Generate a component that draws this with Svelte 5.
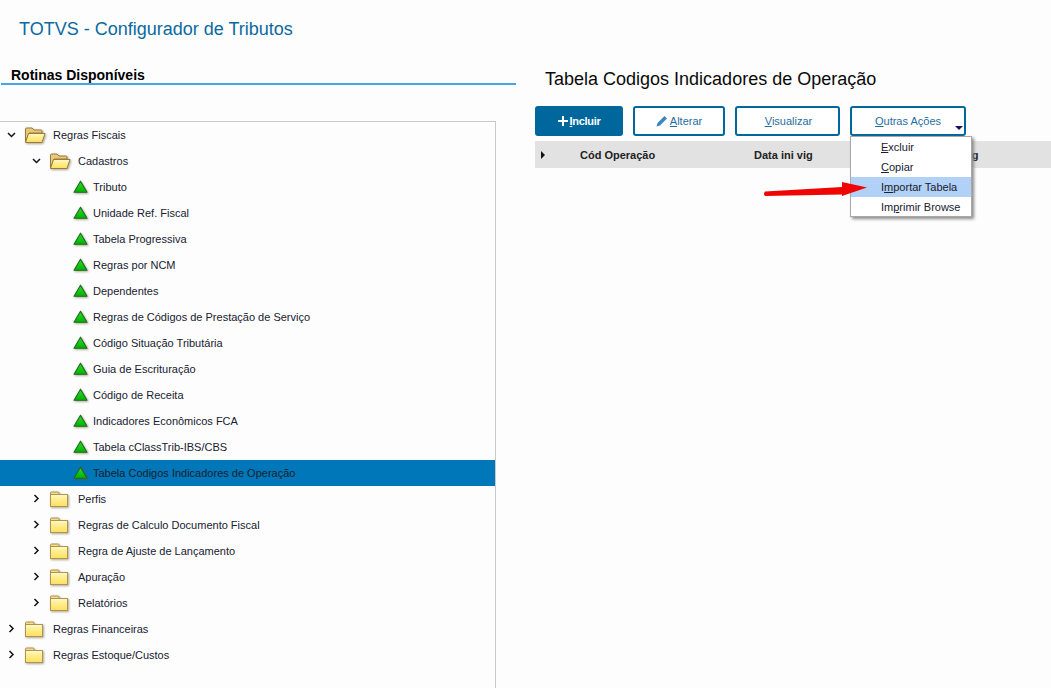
<script lang="ts">
	type Node = { label: string; level: number; kind: 'open' | 'closed' | 'leaf'; selected?: boolean };

	const leaves = [
		'Tributo',
		'Unidade Ref. Fiscal',
		'Tabela Progressiva',
		'Regras por NCM',
		'Dependentes',
		'Regras de Códigos de Prestação de Serviço',
		'Código Situação Tributária',
		'Guia de Escrituração',
		'Código de Receita',
		'Indicadores Econômicos FCA',
		'Tabela cClassTrib-IBS/CBS',
		'Tabela Codigos Indicadores de Operação'
	];

	const nodes: Node[] = [
		{ label: 'Regras Fiscais', level: 0, kind: 'open' },
		{ label: 'Cadastros', level: 1, kind: 'open' },
		...leaves.map((label, i): Node => ({ label, level: 2, kind: 'leaf', selected: i === leaves.length - 1 })),
		{ label: 'Perfis', level: 1, kind: 'closed' },
		{ label: 'Regras de Calculo Documento Fiscal', level: 1, kind: 'closed' },
		{ label: 'Regra de Ajuste de Lançamento', level: 1, kind: 'closed' },
		{ label: 'Apuração', level: 1, kind: 'closed' },
		{ label: 'Relatórios', level: 1, kind: 'closed' },
		{ label: 'Regras Financeiras', level: 0, kind: 'closed' },
		{ label: 'Regras Estoque/Custos', level: 0, kind: 'closed' }
	];
</script>

<svg class="defs" width="0" height="0">
	<defs>
		<linearGradient id="tri-fill" x1="0" y1="0" x2="0" y2="1">
			<stop offset="0" stop-color="#2fdc2f" />
			<stop offset="1" stop-color="#00b400" />
		</linearGradient>
		<linearGradient id="folder-fill" x1="0" y1="0" x2="0" y2="1">
			<stop offset="0" stop-color="#fffbd8" />
			<stop offset="0.3" stop-color="#fff09a" />
			<stop offset="1" stop-color="#ffdf5c" />
		</linearGradient>
	</defs>
</svg>

<div class="page">
	<h1 class="app-title">TOTVS - Configurador de Tributos</h1>

	<div class="columns">
		<section class="left">
			<h2 class="routines">Rotinas Disponíveis</h2>
			<div class="tree">
				{#each nodes as node}
					<div class="row level-{node.level} {node.kind}" class:selected={node.selected}>
						{#if node.kind === 'leaf'}
							<svg class="tri" width="18" height="16" viewBox="0 0 18 16">
								<path d="M7.5 2.2 L14 13.2 H1 Z" fill="url(#tri-fill)" stroke="#1f6a1f" stroke-width="1.1" stroke-linejoin="round" />
							</svg>
						{:else}
							<svg class="chev" width="10" height="10" viewBox="0 0 10 10">
								{#if node.kind === 'open'}
									<path d="M1 3 L4.5 6.5 L8 3" fill="none" stroke="#10131f" stroke-width="1.5" />
								{:else}
									<path d="M2.5 1 L6 4.5 L2.5 8" fill="none" stroke="#10131f" stroke-width="1.5" />
								{/if}
							</svg>
							{#if node.kind === 'open'}
								<svg class="folder" width="22" height="18" viewBox="0 0 22 18">
									<path d="M1.5 16 V3 Q1.5 2 2.5 2 H8 L10 4 H17 Q18 4 18 5 V7 H5 Z" fill="#e9c878" stroke="#9a7a3e" />
									<path d="M1.5 16.5 L4.5 7.5 H21 L18 16.5 Z" fill="url(#folder-fill)" stroke="#9a7a3e" />
								</svg>
							{:else}
								<svg class="folder" width="22" height="18" viewBox="0 0 22 18">
									<path d="M1.5 4.5 V3 Q1.5 2 2.5 2 H9 Q10 2 10 3 V4.5 Z" fill="#f4dc8c" stroke="#b2924f" />
									<rect x="1.5" y="4.5" width="17" height="12" fill="url(#folder-fill)" stroke="#b2924f" />
								</svg>
							{/if}
						{/if}
						<span class="label">{node.label}</span>
					</div>
				{/each}
			</div>
		</section>

		<section class="right">
			<h2 class="view-title">Tabela Codigos Indicadores de Operação</h2>
			<div class="toolbar">
				<button class="btn primary w-incluir">
					<svg width="10" height="10" viewBox="0 0 10 10"><path d="M5 0 V10 M0 5 H10" stroke="#fff" stroke-width="2" /></svg>
					<span><u>I</u>ncluir</span>
				</button>
				<button class="btn w-alterar">
					<svg width="12" height="12" viewBox="0 0 12 12"><path d="M0.5 11.5 L1.5 8 L8.5 1 L11 3.5 L4 10.5 Z" fill="#3a86bd" /></svg>
					<span><u>A</u>lterar</span>
				</button>
				<button class="btn w-visualizar"><span><u>V</u>isualizar</span></button>
				<div class="more">
					<button class="btn w-outras">
						<span><u>O</u>utras Ações</span>
						<i class="caret"></i>
					</button>
					<ul class="menu">
						<li><u>E</u>xcluir</li>
						<li><u>C</u>opiar</li>
						<li class="hover">I<u>m</u>portar Tabela</li>
						<li>Im<u>p</u>rimir Browse</li>
					</ul>
					<svg class="arrow" width="108" height="20" viewBox="0 0 108 20">
						<path d="M5 11.5 L82 7 L82 2 L107 7.5 L82 16 L82 14.5 L5 16 Q3 14 5 11.5 Z" fill="#f00505" />
					</svg>
				</div>
			</div>
			<div class="grid-head">
				<i class="expander"></i>
				<span class="col-code">Cód Operação</span>
				<span class="col-start">Data ini vig</span>
				<span class="col-end">Data fim vig</span>
			</div>
		</section>
	</div>
</div>

<style>
	:global(body) {
		background: #fdfdfd;
		overflow: hidden;
	}

	.defs {
		position: absolute;
	}

	.page {
		height: 688px;
		overflow: hidden;
		font-family: 'Liberation Sans', Arial, sans-serif;
		color: #17212f;
	}

	.app-title {
		margin: 0;
		padding: 18px 0 0 19px;
		height: 50px;
		box-sizing: border-box;
		font-size: 18px;
		font-weight: 400;
		line-height: 22px;
		color: #0b699f;
	}

	.columns {
		display: flex;
	}

	.left {
		width: 515px;
		margin-left: 1px;
		flex: none;
	}

	.routines {
		margin: 0;
		padding: 18px 0 0 10px;
		height: 35px;
		box-sizing: border-box;
		font-size: 14px;
		line-height: 14px;
		font-weight: 700;
		color: #000;
		border-bottom: 2px solid #45a5e8;
	}

	.tree {
		margin: 36px 0 0 -1px;
		width: 496px;
		box-sizing: border-box;
		border-top: 1px solid #c9c9c9;
		border-right: 1px solid #c9c9c9;
		height: 570px;
	}

	.row {
		display: flex;
		align-items: center;
		height: 26px;
		font-size: 11px;
	}

	.row.selected {
		background: #0077b8;
	}

	.chev {
		margin-right: 7px;
		flex: none;
	}

	.folder,
	.tri {
		flex: none;
		filter: drop-shadow(1px 1px 1px rgba(90, 80, 50, 0.5));
	}

	.folder {
		margin-right: 7px;
	}

	.tri {
		margin-right: 2px;
	}

	.level-0 {
		padding-left: 7px;
	}

	.level-1 {
		padding-left: 32px;
	}

	.level-2 {
		padding-left: 73px;
	}

	.right {
		flex: 1;
		margin-left: 19px;
		min-width: 0;
	}

	.view-title {
		margin: 0;
		padding: 18px 0 0 10px;
		height: 56px;
		box-sizing: border-box;
		font-size: 18px;
		line-height: 22px;
		font-weight: 400;
		color: #0a0a0a;
	}

	.toolbar {
		display: flex;
		gap: 10px;
	}

	.btn {
		display: flex;
		align-items: center;
		justify-content: center;
		gap: 2px;
		height: 30px;
		padding: 0;
		border: 2px solid #00679c;
		border-radius: 3px;
		background: #fff;
		color: #1f6e9f;
		font: 11px 'Liberation Sans', Arial, sans-serif;
		position: relative;
	}

	.btn.primary {
		background: #00679c;
		color: #fff;
		font-weight: 700;
		letter-spacing: -0.3px;
	}

	.w-incluir {
		width: 88px;
	}

	.w-alterar {
		width: 92px;
	}

	.w-visualizar {
		width: 105px;
		padding-left: 2px;
	}

	.w-outras {
		width: 116px;
	}

	.caret {
		position: absolute;
		right: 1px;
		bottom: 4px;
		border-left: 4px solid transparent;
		border-right: 4px solid transparent;
		border-top: 4px solid #10106e;
	}

	.more {
		position: relative;
	}

	.menu {
		position: absolute;
		z-index: 2;
		top: 30px;
		left: 0;
		width: 122px;
		margin: 0;
		padding: 0;
		box-sizing: border-box;
		list-style: none;
		background: #fff;
		border: 1px solid #a8a8a8;
		box-shadow: 2px 2px 3px #8a8a8a;
		height: 81px;
	}

	.menu li {
		height: 20px;
		padding-left: 30px;
		font-size: 11px;
		line-height: 20px;
		color: #17212f;
	}

	.menu li.hover {
		background: #b1d1f6;
	}

	.arrow {
		position: absolute;
		z-index: 3;
		top: 74px;
		left: -90px;
	}

	.grid-head {
		display: flex;
		align-items: center;
		height: 27px;
		margin-top: 5px;
		background: #e2e2e2;
		font-size: 11px;
		font-weight: 700;
		color: #222;
		position: relative;
	}

	.expander {
		margin-left: 6px;
		border-top: 4px solid transparent;
		border-bottom: 4px solid transparent;
		border-left: 4px solid #111;
	}

	.col-code {
		margin-left: 35px;
		width: 174px;
	}

	.col-start {
		width: 162px;
	}
</style>
